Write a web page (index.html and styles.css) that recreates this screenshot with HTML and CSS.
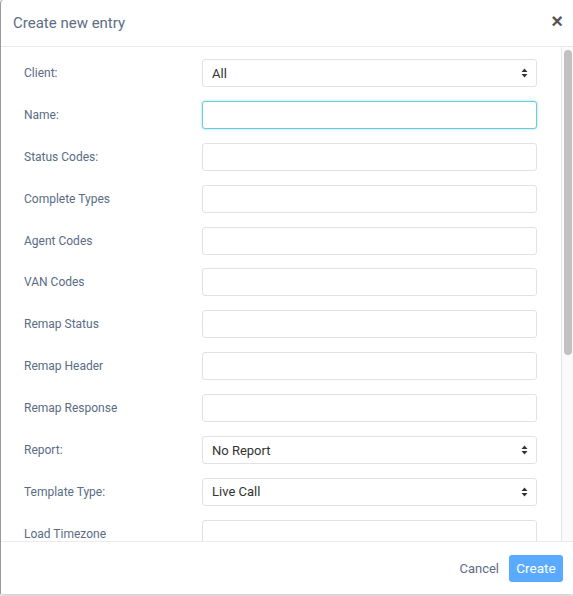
FILE: index.html
```html
<!DOCTYPE html>
<html lang="en">
<head>
  <meta charset="UTF-8" />
  <meta name="viewport" content="width=device-width, initial-scale=1.0"/>
  <title>Create new entry</title>
  <link rel="stylesheet" href="styles.css">
</head>
<body>

  <!-- Modal dialog -->
  <div class="modal">
    <div class="modal-header">
      <h1 class="modal-title">Create new entry</h1>
      <button class="close-btn" aria-label="Close">&times;</button>
    </div>

    <div class="modal-main">
      <div class="modal-body">
        <div class="form-row">
          <label>Client:</label>
          <div class="select-wrap">
            <select class="field"><option>All</option></select>
            <svg class="caret" width="7" height="10" viewBox="0 0 7 10"><path d="M3.5 0.5 L6.5 4 H0.5 Z M3.5 9.5 L6.5 6 H0.5 Z" fill="#333"/></svg>
          </div>
        </div>
        <div class="form-row">
          <label>Name:</label>
          <input class="field focused" type="text">
        </div>
        <div class="form-row">
          <label>Status Codes:</label>
          <input class="field" type="text">
        </div>
        <div class="form-row">
          <label>Complete Types</label>
          <input class="field" type="text">
        </div>
        <div class="form-row">
          <label>Agent Codes</label>
          <input class="field" type="text">
        </div>
        <div class="form-row">
          <label>VAN Codes</label>
          <input class="field" type="text">
        </div>
        <div class="form-row">
          <label>Remap Status</label>
          <input class="field" type="text">
        </div>
        <div class="form-row">
          <label>Remap Header</label>
          <input class="field" type="text">
        </div>
        <div class="form-row">
          <label>Remap Response</label>
          <input class="field" type="text">
        </div>
        <div class="form-row">
          <label>Report:</label>
          <div class="select-wrap">
            <select class="field"><option>No Report</option></select>
            <svg class="caret" width="7" height="10" viewBox="0 0 7 10"><path d="M3.5 0.5 L6.5 4 H0.5 Z M3.5 9.5 L6.5 6 H0.5 Z" fill="#333"/></svg>
          </div>
        </div>
        <div class="form-row">
          <label>Template Type:</label>
          <div class="select-wrap">
            <select class="field"><option>Live Call</option></select>
            <svg class="caret" width="7" height="10" viewBox="0 0 7 10"><path d="M3.5 0.5 L6.5 4 H0.5 Z M3.5 9.5 L6.5 6 H0.5 Z" fill="#333"/></svg>
          </div>
        </div>
        <div class="form-row">
          <label>Load Timezone</label>
          <input class="field" type="text">
        </div>
      </div>

      <!-- scrollbar for the form area -->
      <div class="scroll-track">
        <div class="scroll-thumb"></div>
      </div>
    </div>

    <div class="modal-footer">
      <button class="btn-link">Cancel</button>
      <button class="btn-primary">Create</button>
    </div>
  </div>

</body>
</html>
```

FILE: styles.css
```css
html, body {
  margin: 0;
  padding: 0;
  height: 100%;
}

body {
  font-family: Roboto, "Liberation Sans", sans-serif;
  background: #ececec;
  overflow: hidden;
}

.modal {
  height: 594px;
  display: flex;
  flex-direction: column;
  background: #fff;
  border-left: 1px solid #9a9a9a;
  border-top-left-radius: 4px;
  box-shadow: 0 2px 4px rgba(0,0,0,0.12);
}

/* Header */
.modal-header {
  height: 46px;
  flex: none;
  display: flex;
  align-items: center;
  justify-content: space-between;
  border-bottom: 1px solid #e9e9e9;
  padding: 0 8px 0 12px;
}

.modal-title {
  margin: 0;
  font-size: 15px;
  font-weight: 400;
  color: #5c6d84;
}

.close-btn {
  border: none;
  background: none;
  padding: 0 2px;
  font-size: 20px;
  font-weight: 700;
  line-height: 1;
  color: #555;
  margin-top: -4px;
  cursor: pointer;
}

/* Body with form rows and scrollbar */
.modal-main {
  flex: 1;
  display: flex;
  min-height: 0;
}

.modal-body {
  flex: 1;
  overflow: hidden;
  padding: 12px 24px 0 23px;
  display: flex;
  flex-direction: column;
  gap: 13.9px;
}

.scroll-track {
  width: 12px;
  flex: none;
  box-sizing: border-box;
  background: #fafafa;
  border-left: 1px solid #e6e6e6;
  padding: 3px 1px 0 2px;
}

.scroll-thumb {
  height: 305px;
  background: #c1c1c1;
  border-radius: 4px;
}

.form-row {
  display: grid;
  grid-template-columns: 178px 1fr;
  align-items: center;
  flex: none;
}

.form-row label {
  font-size: 12px;
  color: #5a6c85;
}

.field {
  box-sizing: border-box;
  width: 100%;
  height: 28px;
  border: 1px solid #e2e2e2;
  border-radius: 3px;
  background: #fff;
  padding: 0 9px;
  font-family: inherit;
  font-size: 13px;
  color: #333;
  outline: none;
  display: block;
}

.field.focused {
  border-color: #6ccbd9;
  box-shadow: 0 0 3px rgba(108, 203, 217, 0.7);
}

.select-wrap {
  position: relative;
}

select.field {
  appearance: none;
  -webkit-appearance: none;
}

.caret {
  position: absolute;
  right: 9px;
  top: 9px;
  pointer-events: none;
}

/* Footer */
.modal-footer {
  height: 53px;
  flex: none;
  box-sizing: border-box;
  border-top: 1px solid #ececec;
  display: flex;
  align-items: center;
  justify-content: flex-end;
  gap: 10px;
  padding: 0 10px 0 0;
}

.btn-link {
  border: none;
  background: none;
  font-family: inherit;
  font-size: 13px;
  color: #5c6d84;
  padding: 6px 0;
}

.btn-primary {
  border: none;
  border-radius: 3px;
  background: #5aabff;
  color: #fff;
  font-family: inherit;
  font-size: 13.5px;
  height: 27px;
  width: 54px;
  padding: 0;
}
```
